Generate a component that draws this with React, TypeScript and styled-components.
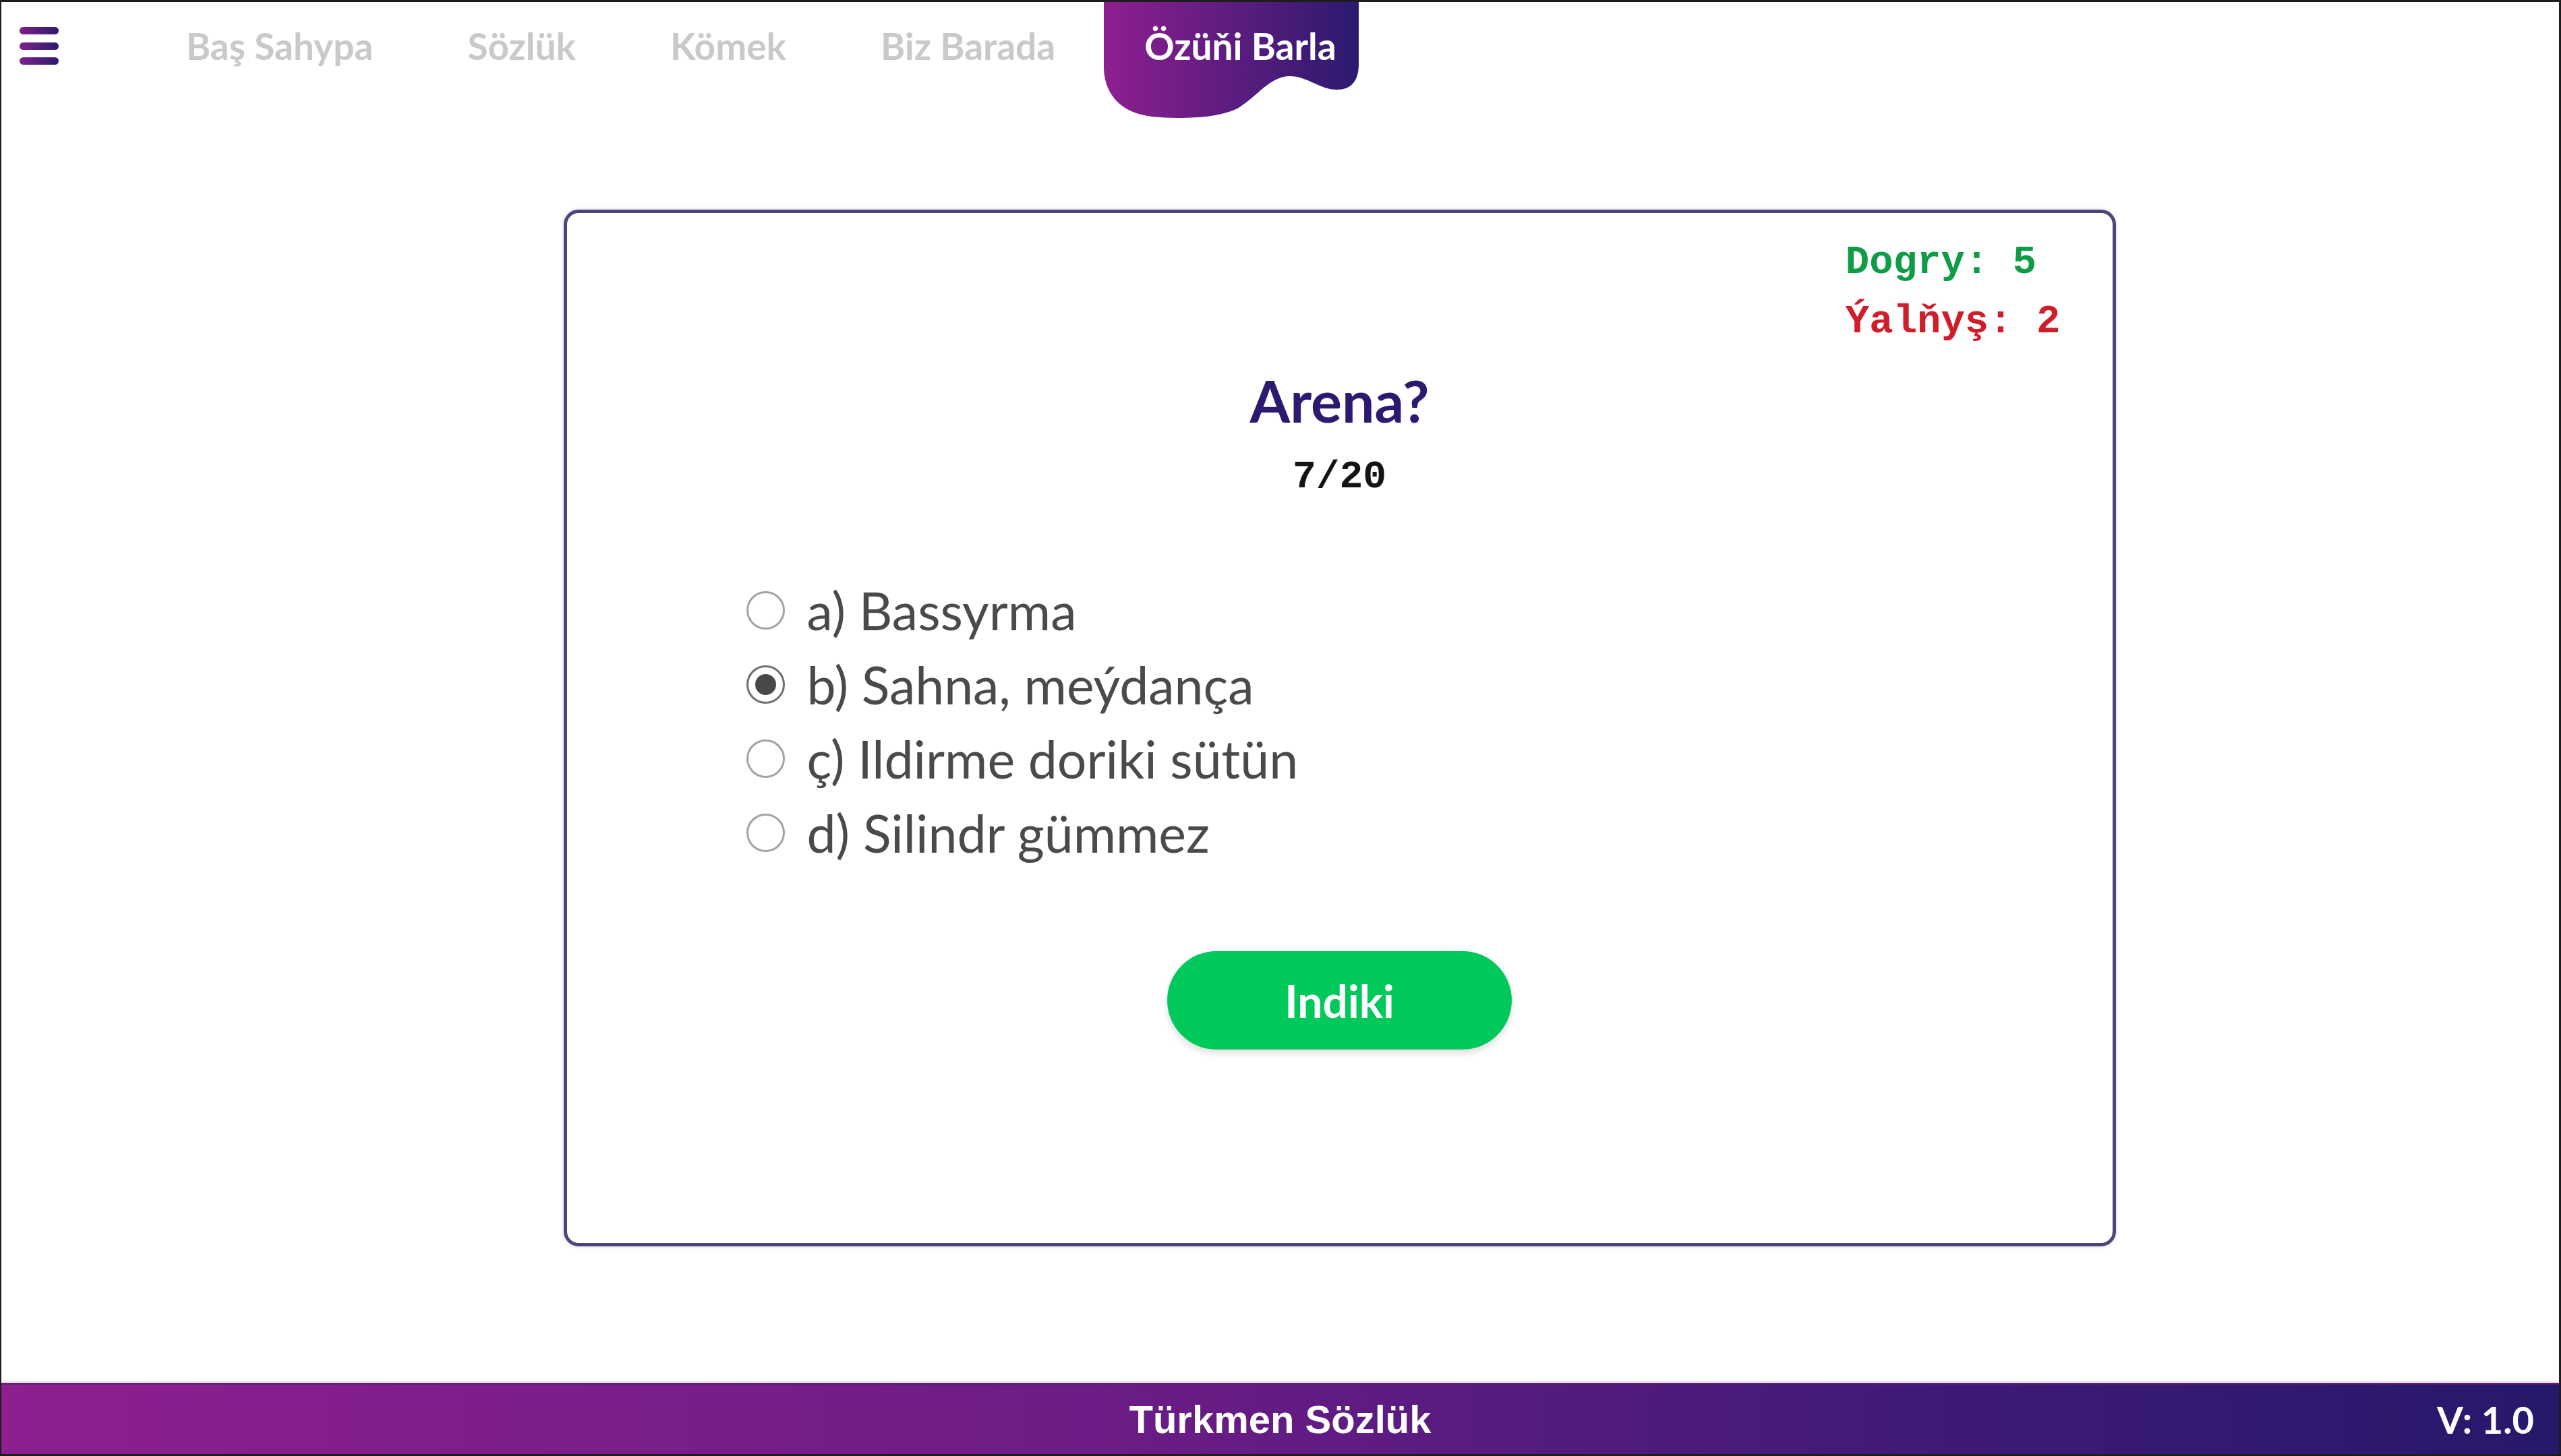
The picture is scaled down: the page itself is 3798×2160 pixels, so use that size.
import React from "react";
import styled, { createGlobalStyle } from "styled-components";

const GlobalStyle = createGlobalStyle`
  html, body {
    margin: 0;
    padding: 0;
    background: #ffffff;
  }
  * { box-sizing: border-box; }
`;

const Frame = styled.div`
  height: 100vh;
  display: flex;
  flex-direction: column;
  border-style: solid;
  border-color: #1d1d1d;
  border-width: 3px 3px 3px 2px;
  overflow: hidden;
  background: #ffffff;
  font-family: Lato, "Open Sans", sans-serif;
`;

const Header = styled.header`
  height: 130px;
  flex-shrink: 0;
  display: flex;
  align-items: stretch;
  padding-left: 27px;
`;

const MenuButton = styled.button`
  align-self: center;
  width: 58px;
  height: 56px;
  padding: 0;
  border: 0;
  background: transparent;
  display: flex;
  flex-direction: column;
  justify-content: space-between;
  cursor: pointer;
`;

const MenuBar = styled.span`
  display: block;
  height: 11px;
  border-radius: 6px;
  background: linear-gradient(90deg, #7e2189, #2c1b6b);
`;

const Nav = styled.nav`
  display: flex;
  align-items: stretch;
  margin-left: 119px;
`;

const NavLink = styled.a`
  display: flex;
  align-items: center;
  padding: 0 70px;
  font-family: Lato, sans-serif;
  font-weight: 700;
  font-size: 55px;
  color: #c9c9c9;
  text-decoration: none;
  white-space: nowrap;
`;

const ActiveLink = styled(NavLink)`
  position: relative;
  padding: 0 32px 0 62px;
  color: #ffffff;
`;

const Blob = styled.svg`
  position: absolute;
  top: 0;
  left: 2px;
  z-index: 0;
`;

const LinkLabel = styled.span`
  position: relative;
  z-index: 1;
`;

const Main = styled.main`
  flex: 1;
  display: flex;
  justify-content: center;
  align-items: flex-start;
  padding: 178px 0 0 176px;
`;

const Card = styled.section`
  width: 2302px;
  height: 1538px;
  border: 5px solid #4a4675;
  border-radius: 22px;
  box-shadow: 0 0 4px rgba(110, 95, 210, 0.35);
  display: flex;
  flex-direction: column;
  align-items: center;
  padding-top: 30px;
`;

const Score = styled.div`
  align-self: flex-end;
  margin-right: 77px;
  display: flex;
  flex-direction: column;
  font-family: "Liberation Mono", "DejaVu Sans Mono", monospace;
  font-weight: 700;
  font-size: 59px;
  line-height: 88px;
`;

const ScoreLine = styled.span<{ $tone: "good" | "bad" }>`
  color: ${(p) => (p.$tone === "good" ? "#109c47" : "#cf1d2b")};
  white-space: pre;
`;

const Question = styled.h1`
  margin: 20px 0 0;
  font-family: Lato, sans-serif;
  font-weight: 700;
  font-size: 86px;
  line-height: 1.2;
  color: #2d1a70;
`;

const Counter = styled.div`
  margin-top: 30px;
  font-family: "Liberation Mono", "DejaVu Sans Mono", monospace;
  font-weight: 700;
  font-size: 58px;
  color: #141414;
`;

const Options = styled.div`
  width: 1760px;
  margin-top: 110px;
  display: flex;
  flex-direction: column;
`;

const Option = styled.label`
  height: 110px;
  display: flex;
  align-items: center;
  gap: 33px;
  font-family: Lato, "Open Sans", sans-serif;
  font-weight: 400;
  font-size: 77px;
  color: #4a4a4a;
  cursor: pointer;
`;

const Radio = styled.span<{ $checked?: boolean }>`
  flex-shrink: 0;
  width: 57px;
  height: 57px;
  border-radius: 50%;
  border: 3px solid ${(p) => (p.$checked ? "#707070" : "#a3a3a3")};
  display: grid;
  place-items: center;
  background: #ffffff;

  &::after {
    content: "";
    width: 31px;
    height: 31px;
    border-radius: 50%;
    background: ${(p) => (p.$checked ? "#484848" : "transparent")};
  }
`;

const NextButton = styled.button`
  margin-top: 121px;
  width: 511px;
  height: 146px;
  border: 0;
  border-radius: 73px;
  background: #00c95b;
  color: #ffffff;
  font-family: Lato, sans-serif;
  font-weight: 700;
  font-size: 66px;
  box-shadow: 0 6px 10px rgba(0, 0, 0, 0.12);
  cursor: pointer;
`;

const Footer = styled.footer`
  height: 105px;
  flex-shrink: 0;
  display: grid;
  grid-template-columns: 1fr auto 1fr;
  align-items: center;
  padding: 0 37px;
  background: linear-gradient(90deg, #8d1f8f 0%, #6a1c85 45%, #3f1a78 75%, #27186b 100%);
  border-top: 2px solid #54216a;
  box-shadow: 0 -2px 2px rgba(230, 180, 235, 0.8);
  color: #ffffff;
`;

const FooterTitle = styled.div`
  grid-column: 2;
  font-family: "Liberation Sans", Arial, sans-serif;
  font-weight: 700;
  font-size: 58px;
`;

const Version = styled.div`
  grid-column: 3;
  justify-self: end;
  font-family: Lato, sans-serif;
  font-weight: 700;
  font-size: 56px;
`;

const navItems = ["Baş Sahypa", "Sözlük", "Kömek", "Biz Barada"];

const answers = [
  { key: "a", text: "a) Bassyrma", checked: false },
  { key: "b", text: "b) Sahna, meýdança", checked: true },
  { key: "c", text: "ç) Ildirme doriki sütün", checked: false },
  { key: "d", text: "d) Silindr gümmez", checked: false },
];

export default function App() {
  return (
    <>
      <GlobalStyle />
      <Frame>
        <Header>
          <MenuButton aria-label="Menu">
            <MenuBar />
            <MenuBar />
            <MenuBar />
          </MenuButton>
          <Nav>
            {navItems.map((item) => (
              <NavLink key={item} href="#">
                {item}
              </NavLink>
            ))}
            <ActiveLink href="#">
              <Blob width="378" height="172" viewBox="0 0 378 172" aria-hidden="true">
                <defs>
                  <linearGradient id="blobGrad" x1="0" y1="0" x2="1" y2="0">
                    <stop offset="0%" stopColor="#8e1f90" />
                    <stop offset="100%" stopColor="#2b1a6f" />
                  </linearGradient>
                </defs>
                <path
                  d="M0,0 H378 V92 C378,118 366,130 346,130 C320,130 302,110 276,110 C246,110 228,140 198,158 C168,173 112,174 72,170 C26,165 2,138 0,100 Z"
                  fill="url(#blobGrad)"
                />
              </Blob>
              <LinkLabel>Özüňi Barla</LinkLabel>
            </ActiveLink>
          </Nav>
        </Header>

        <Main>
          <Card>
            <Score>
              <ScoreLine $tone="good">Dogry: 5</ScoreLine>
              <ScoreLine $tone="bad">Ýalňyş: 2</ScoreLine>
            </Score>
            <Question>Arena?</Question>
            <Counter>7/20</Counter>
            <Options>
              {answers.map((a) => (
                <Option key={a.key}>
                  <Radio $checked={a.checked} />
                  <span>{a.text}</span>
                </Option>
              ))}
            </Options>
            <NextButton>Indiki</NextButton>
          </Card>
        </Main>

        <Footer>
          <FooterTitle>Türkmen Sözlük</FooterTitle>
          <Version>V: 1.0</Version>
        </Footer>
      </Frame>
    </>
  );
}
